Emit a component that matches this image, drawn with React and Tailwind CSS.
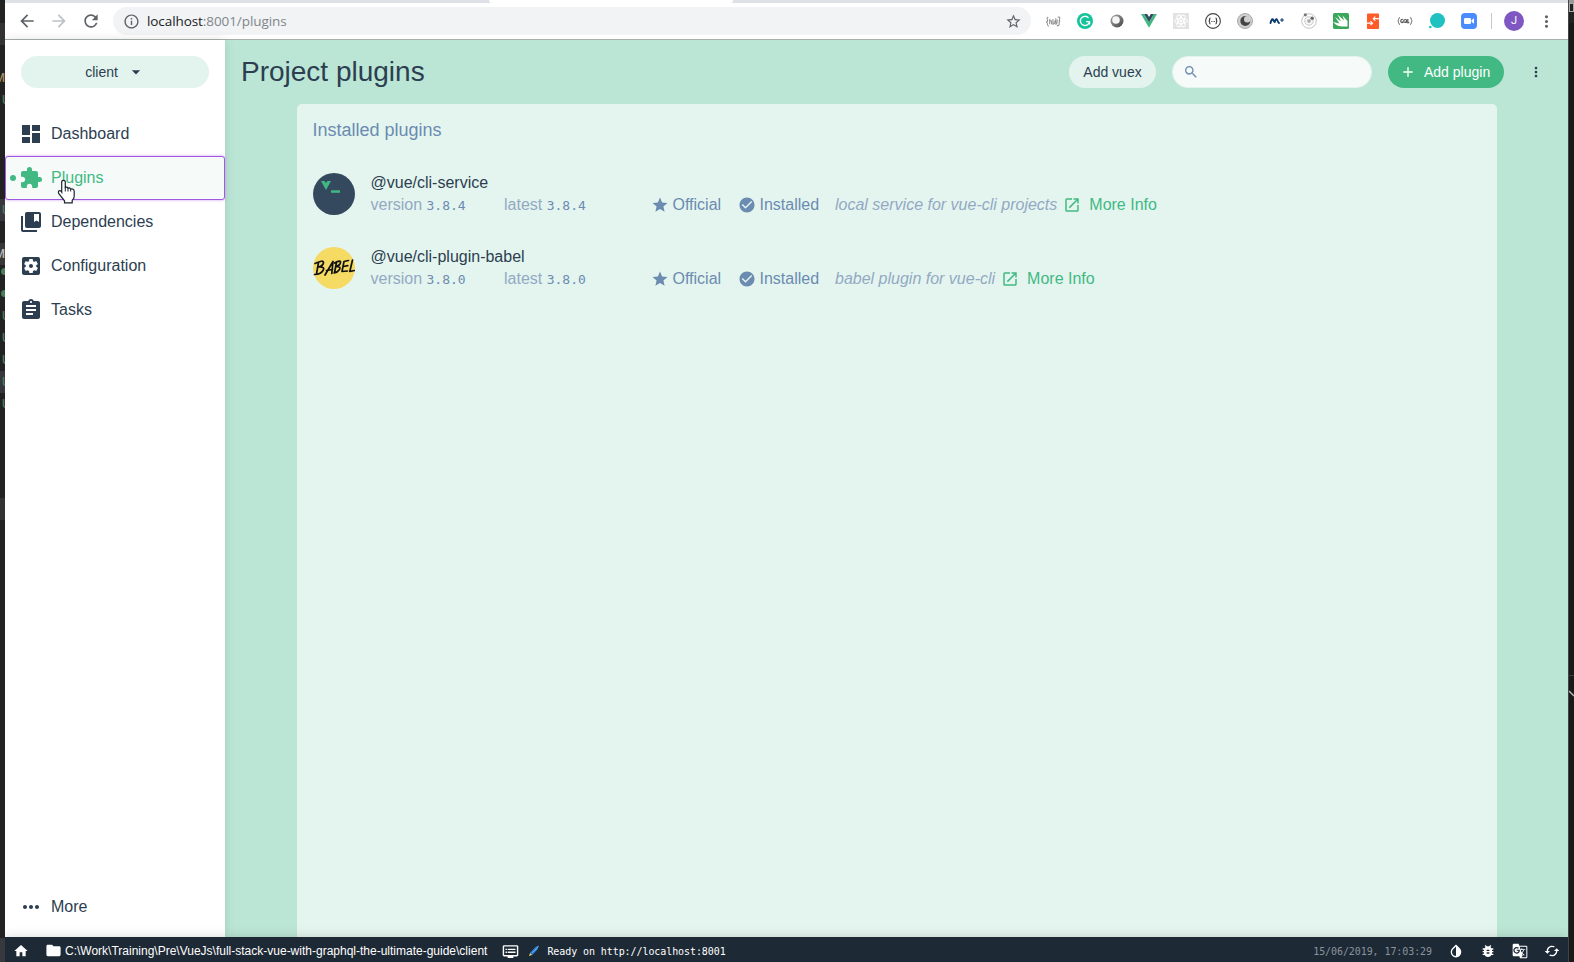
import React from "react";
import {
  MdDashboard, MdExtension, MdCollectionsBookmark, MdAssignment,
  MdMoreHoriz, MdMoreVert, MdSearch, MdAdd, MdArrowDropDown, MdStar, MdCheckCircle,
  MdOpenInNew, MdHome, MdFolder, MdDvr, MdBugReport, MdGTranslate, MdLoop,
  MdArrowBack, MdArrowForward, MdRefresh, MdInfoOutline, MdStarBorder, MdSettingsApplications,
} from "react-icons/md";

const MONO = "font-['DejaVu_Sans_Mono',monospace]";

function Ext({ children }) {
  return <div className="flex h-4 w-4 shrink-0 items-center justify-center">{children}</div>;
}

function Extensions() {
  return (
    <div className="flex gap-4">
      <Ext>
        <svg width="17" height="16" viewBox="0 0 17 16" fill="none" stroke="#8f8f8f" strokeWidth="1.100">
          <path d="M3.500 4Q1.500 4 2.500 6.500T1 9Q2.500 9 2.500 11T4 13.500M13.500 4Q16.500 3 15.500 6T16 8Q14.500 9 15 11T12.500 13M5 6v5.500M5 9q1.500-3 2 0v2.500M8.500 6v5.500q2 0 2-4M11.500 5v6.500q1.500 0 1.500-5" />
        </svg>
      </Ext>
      <Ext>
        <svg width="16" height="16" viewBox="0 0 16 16" className="shrink-0">
          <circle cx="8" cy="8" r="8" fill="#15c39a" />
          <path d="M11.500 5A4.600 4.600 0 1 0 12.500 8.600H9.200M12.500 8.600v3" fill="none" stroke="#fff" strokeWidth="1.400" />
        </svg>
      </Ext>
      <Ext>
        <svg width="16" height="16" viewBox="0 0 16 16">
          <defs><linearGradient id="ring" x1="0" y1="0" x2="1" y2="1"><stop stopColor="#aaa" /><stop offset="1" stopColor="#444" /></linearGradient></defs>
          <circle cx="8" cy="8" r="6.500" fill="url(#ring)" /><circle cx="7" cy="7" r="3.800" fill="#f5f5f5" />
        </svg>
      </Ext>
      <Ext>
        <svg width="16" height="16" viewBox="0 0 16 16">
          <path d="M0 1h3.200L8 9.300 12.800 1H16L8 14.800z" fill="#41b883" /><path d="M3.200 1h3L8 4l1.800-3h3L8 9.300z" fill="#35495e" />
        </svg>
      </Ext>
      <Ext>
        <svg width="16" height="16" viewBox="0 0 16 16">
          <path d="M0 0h16v16H0z" fill="#e2e2e2" />
          <g fill="none" stroke="#fff"><ellipse cx="8" cy="8" rx="6.500" ry="2.600" /><ellipse cx="8" cy="8" rx="6.500" ry="2.600" transform="rotate(60 8 8)" /><ellipse cx="8" cy="8" rx="6.500" ry="2.600" transform="rotate(120 8 8)" /></g>
          <circle cx="8" cy="8" r="1.300" fill="#fff" />
        </svg>
      </Ext>
      <Ext>
        <svg width="16" height="16" viewBox="0 0 16 16" fill="none" stroke="#444">
          <circle cx="8" cy="8" r="7.400" strokeWidth="1.100" />
          <path d="M5.500 5Q4.500 5 4.600 6.500T3.600 8Q4.600 8 4.600 9.500T5.500 11M10.500 5q1 0 .9 1.500t1 1.500q-1 0-1 1.500t-.9 1.500" strokeWidth="1.200" />
          <path d="M6.300 8.500h.8M7.700 8.500h.8M9.100 8.500h.8" />
        </svg>
      </Ext>
      <Ext>
        <svg width="16" height="16" viewBox="0 0 16 16">
          <circle cx="8" cy="8" r="7.500" fill="#cfcfcf" stroke="#aaa" /><circle cx="8.300" cy="8" r="5" fill="#444" /><circle cx="10.300" cy="6.300" r="3.300" fill="#cfcfcf" />
        </svg>
      </Ext>
      <Ext>
        <svg width="16" height="16" viewBox="0 0 16 16" fill="none" stroke="#0b3a6e" strokeLinecap="round" strokeLinejoin="round">
          <path d="M1.500 10Q3 4.500 4.300 7T5.700 9Q7.200 4.500 8.200 7T10 10" strokeWidth="1.900" /><path d="M11.500 7h3M13 5.500v3" strokeWidth="1.100" />
        </svg>
      </Ext>
      <Ext>
        <svg width="16" height="16" viewBox="0 0 16 16" fill="none" stroke="#c3c3c3">
          <circle cx="8" cy="8" r="7.300" /><circle cx="8" cy="8" r="4.200" /><circle cx="8" cy="8" r="1.800" fill="#aaa" /><circle cx="4.300" cy="1.800" r="1.600" fill="#777" stroke="none" /><circle cx="11.200" cy="5.200" r="1.700" fill="#666" stroke="none" />
        </svg>
      </Ext>
      <Ext>
        <svg width="16" height="16" viewBox="0 0 16 16">
          <rect width="16" height="16" rx="1.500" fill="#3aa85a" />
          <path d="M4.500 1.500L11 7.500 9.500 2.500 14.500 8v5.500H9.500Q4 13.500 0 9l6.500 1.500L2 4l6 4.500z" fill="#fff" />
        </svg>
      </Ext>
      <Ext>
        <svg width="16" height="16" viewBox="0 0 16 16">
          <rect x="2" y=".5" width="12" height="15.500" rx=".8" fill="#ff5b29" />
          <path d="M14 5.700H8.500M10.300 3.700L8.300 5.700l2 2M2 10.200h5.500M5.500 8.200l2 2-2 2" fill="none" stroke="#fff" strokeWidth="1.200" />
        </svg>
      </Ext>
      <Ext>
        <svg width="16" height="16" viewBox="0 0 16 16" fill="none" stroke="#555">
          <path d="M3 4.500q-1.300 0-1.300 1.700T.7 8q1 0 1 1.800T3 11.500M13 4.500q1.300 0 1.300 1.700t1 1.800q-1 0-1 1.800T13 11.500" strokeWidth=".8" />
          <path d="M5.800 6.500Q3.800 6 3.800 8t2 1.500V8.200M10.800 6v3.700h1.500" strokeWidth="1.200" /><circle cx="8.200" cy="8" r="1.500" strokeWidth="1.200" /><path d="M8.500 8.500l1.200 1.700" />
        </svg>
      </Ext>
      <Ext>
        <svg width="16" height="16" viewBox="0 0 16 16" fill="#20c1c1" className="shrink-0"><circle cx="8.500" cy="7.500" r="7.500" /><circle cx="1.300" cy="14" r="1.300" /></svg>
      </Ext>
      <Ext>
        <svg width="16" height="16" viewBox="0 0 16 16">
          <rect width="16" height="16" rx="4" fill="#4a8cff" /><rect x="3" y="5" width="7" height="6" rx="1.300" fill="#fff" /><path d="M10.500 7.200L13 5.300v5.400l-2.500-1.900z" fill="#fff" />
        </svg>
      </Ext>
    </div>
  );
}

function BrowserBar() {
  return (
    <div className="h-10 shrink-0 border-b border-[#a8b0ac] bg-white">
      <div className="h-[3px] bg-[#dee1e6]">
        <div className="flex h-full"><div className="ml-[484px] h-[3px] w-[244px] rounded-b-[3px] bg-white" /></div>
      </div>
      <div className="flex h-9 items-center">
        <div className="ml-[12px] flex w-[96px] shrink-0 gap-[12px] text-[#5f6368]">
          <MdArrowBack size={20} /><MdArrowForward size={20} className="text-[#bdc1c6]" /><MdRefresh size={20} />
        </div>
        <div className="flex h-7 w-[918px] shrink-0 items-center rounded-full bg-[#f1f3f4]">
          <MdInfoOutline size={17} className="ml-[10px] text-[#5f6368]" />
          <span className="ml-[7px] flex-1 font-['Open_Sans',sans-serif] text-[13.500px] tracking-[-0.080px] text-[#80868b]"><span className="text-[#202124]">localhost</span>:8001/plugins</span>
          <MdStarBorder size={17} className="mr-[9px] text-[#5f6368]" />
        </div>
        <div className="ml-[14px] flex items-center">
          <Extensions />
          <div className="ml-[14px] h-4 w-px bg-[#c8c8c8]" />
          <div className="ml-[12px] flex h-5 w-5 items-center justify-center rounded-full bg-[#7e57c2] font-['Roboto',sans-serif] text-[11px] text-white">J</div>
          <MdMoreVert size={19} className="ml-[13px] text-[#5f6368]" />
        </div>
      </div>
    </div>
  );
}

function NavItem({ icon: Icon, label, active }) {
  return (
    <div className={active
      ? "relative z-10 flex h-11 items-center rounded-[3px] border border-[#9f58e0] bg-[#f6fbf9] pl-[13px] text-[#42b983] shadow-[0_0_3px_#c89cf0]"
      : "flex h-11 items-center pl-[14px] text-[#2c3e50]"}>
      {active && <span className="absolute left-[4px] top-[18px] h-1.5 w-1.5 rounded-full bg-[#42b983]" />}
      <Icon className="h-6 w-6" />
      <span className="ml-[8px] text-[16px]">{label}</span>
      {active && (
        <svg className="absolute left-[51px] top-[22px]" width="21" height="26" viewBox="0 0 21 26">
          <path d="M6.500 1.300q1.800 0 1.800 1.800v5.200q2-.7 2.600.8 2-.6 2.600.9 3.500-.8 3.700 2.300v5q0 3-2 4v2.500H7.500v-2L2 15q-1.500-2.700.6-3.300 1-.2 2.100 1.500V3.100q0-1.800 1.800-1.800z" fill="#fff" stroke="#1a2330" strokeWidth="1.200" />
          <path d="M8.300 8v4.500M11 9v3.500M13.700 10v2.500" stroke="#1a2330" fill="none" />
        </svg>
      )}
    </div>
  );
}

function Sidebar() {
  return (
    <div className="z-10 flex w-[220px] shrink-0 flex-col bg-white shadow-[0_0_10px_rgba(0,0,0,0.12)]">
      <div className="mx-4 mt-4 flex h-8 items-center justify-center rounded-full bg-[#e3f4ee] text-[14px] text-[#2c3e50]">
        <span className="ml-[1px]">client</span><MdArrowDropDown size={20} className="ml-[8px]" />
      </div>
      <div className="mt-6">
        <NavItem icon={MdDashboard} label="Dashboard" />
        <NavItem icon={MdExtension} label="Plugins" active />
        <NavItem icon={MdCollectionsBookmark} label="Dependencies" />
        <NavItem icon={MdSettingsApplications} label="Configuration" />
        <NavItem icon={MdAssignment} label="Tasks" />
      </div>
      <div className="mt-auto pb-[8px]"><NavItem icon={MdMoreHoriz} label="More" /></div>
    </div>
  );
}

function VueLogo() {
  return (
    <svg width="42" height="42" viewBox="0 0 42 42">
      <circle cx="21" cy="21" r="21" fill="#35495e" />
      <path d="M8 8h3.500l1.500 2 1.500-2H18l-5 9z" fill="#41b883" /><path d="M18 17.300h9v2.500h-9z" fill="#41b883" />
    </svg>
  );
}

function BabelLogo() {
  return (
    <svg width="42" height="42" viewBox="0 0 42 42">
      <circle cx="21" cy="21" r="21" fill="#f5da63" />
      <g fill="none" stroke="#111" strokeWidth="1.700" strokeLinecap="round" strokeLinejoin="round">
        <path d="M5.500 15.500L3.500 27M2 16.500Q10.500 12.500 10.500 15.500T5.500 20Q12.500 19.500 10 23.500T1.500 27.500" />
        <path d="M12 28L20 14.500 18.800 26.500M13.500 23.500l6-1" />
        <path d="M23.500 15.500L21.500 25.500M21.500 16Q28 12.500 27.500 15.500T23 19.500Q28.500 19.500 26.500 22.500T21 26" />
        <path d="M35.500 13.500L31 14.500 29 24.500 34.500 24M30.300 19.500l4.500-.8M39.500 13L36.800 24.500 41.300 23.500" />
      </g>
    </svg>
  );
}

function PluginRow({ logo, name, version, desc }) {
  return (
    <div className="flex h-[74px] items-center px-4">
      {logo}
      <div className="ml-[15.500px] text-[16px] leading-[22px]">
        <div className="text-[#2c3e50]">{name}</div>
        <div className="flex items-center whitespace-nowrap text-[#6b8bb1]">
          <div className="w-[133.500px]"><span className="text-[#93a9c3]">version</span> <span className={MONO + " text-[13px]"}>{version}</span></div>
          <div className="w-[146.500px]"><span className="text-[#93a9c3]">latest</span> <span className={MONO + " text-[13px]"}>{version}</span></div>
          <MdStar size={18} /><span className="ml-[4px] w-[65px]">Official</span>
          <MdCheckCircle size={18} /><span className="ml-[4px] w-[75.500px]">Installed</span>
          <span className="italic text-[#93a9c3]">{desc}</span>
          <MdOpenInNew size={18} className="ml-[6px] text-[#42b983]" /><span className="ml-[8px] text-[#42b983]">More Info</span>
        </div>
      </div>
    </div>
  );
}

function Main() {
  return (
    <div className="flex min-w-0 flex-1 flex-col bg-[#bbe6d6]">
      <div className="flex h-16 shrink-0 items-center gap-4 px-4 text-[14px] text-[#2c3e50]">
        <h1 className="flex-1 text-[28px]">Project plugins</h1>
        <div className="flex h-8 w-[87px] items-center justify-center rounded-full bg-[#e3f4ee]">Add vuex</div>
        <div className="flex h-8 w-[200px] items-center rounded-full border border-[#e3f4ee] bg-[#f6fbf9] pl-[10px]"><MdSearch size={16} className="text-[#6b8bb1]" /></div>
        <div className="flex h-8 w-[116px] items-center rounded-full bg-[#42b983] pl-[12px] text-white"><MdAdd size={16} /><span className="ml-2">Add plugin</span></div>
        <div className="flex h-8 w-8 items-center justify-center"><MdMoreVert size={16} /></div>
      </div>
      <div className="mx-[72px] mr-[71px] flex-1 rounded-t-[5px] bg-[#e4f5ef]">
        <div className="flex h-[53px] items-center px-[15.500px] text-[18px] text-[#6b8bb1]">Installed plugins</div>
        <PluginRow logo={<VueLogo />} name="@vue/cli-service" version="3.8.4" desc="local service for vue-cli projects" />
        <PluginRow logo={<BabelLogo />} name="@vue/cli-plugin-babel" version="3.8.0" desc="babel plugin for vue-cli" />
      </div>
    </div>
  );
}

function StatusBar() {
  return (
    <div className="z-20 flex h-[25px] shrink-0 items-center bg-[#1d2935] text-white shadow-[0_0_12px_rgba(0,0,0,0.16)]">
      <MdHome size={16} className="ml-[8px] mt-[2px]" />
      <MdFolder size={17} className="ml-[16px] mt-[2px]" />
      <span className="ml-[3px] mt-[2px] text-[12px]">C:\Work\Training\Pre\VueJs\full-stack-vue-with-graphql-the-ultimate-guide\client</span>
      <MdDvr size={17} className="ml-[15px] mt-[3px]" />
      <svg width="12" height="12" viewBox="0 0 12 12" className="ml-[9px] mt-[3px]">
        <path d="M11 .5L8 1.500 2.300 7.500v2.500h2L9.500 4.500z" fill="#2d7fd3" /><path d="M10.500 1.500L4.500 7.500" stroke="#7cc0f5" strokeWidth=".8" /><path d="M1 11l1-3 2 2z" fill="#e8d34a" />
      </svg>
      <span className={MONO + " ml-[7px] mt-[3px] text-[10px] tracking-[-0.080px]"}>Ready on http://localhost:8001</span>
      <span className={MONO + " ml-auto mt-[3px] text-[10px] tracking-[-0.080px] text-[#8a949c]"}>15/06/2019, 17:03:29</span>
      <div className="ml-[16px] mr-[8px] mt-[3px] flex gap-[16px]">
        <svg width="16" height="16" viewBox="0 0 24 24" fill="currentColor"><path d="M17.660 7.930L12 2.270 6.340 7.930c-3.120 3.120-3.120 8.190 0 11.310C7.900 20.800 9.950 21.580 12 21.580s4.100-.78 5.660-2.340c3.120-3.120 3.120-8.190 0-11.310zM12 19.590c-1.600 0-3.110-.62-4.240-1.760C6.620 16.690 6 15.190 6 13.590s.62-3.110 1.760-4.240L12 5.100z" /></svg>
        <MdBugReport size={16} /><MdGTranslate size={16} /><MdLoop size={16} className="rotate-90" />
      </div>
    </div>
  );
}

const U = () => <div className="flex h-[22px] items-center pl-[2px]">U</div>;

function LeftEdge() {
  return (
    <div className="flex w-[5px] shrink-0 flex-col overflow-hidden bg-[#222] font-['Roboto',sans-serif] text-[12px] font-medium text-[#477c5c]">
      <div className="mt-[23px] h-[22px] shrink-0 bg-[#333]" />
      <div className="mt-[22px] flex h-[22px] items-center justify-end text-[#a58b60]">M</div>
      <U />
      <div className="mt-[88px] bg-[#37373d]"><U /></div>
      <div className="mt-[22px] flex h-[22px] items-center justify-end bg-[#383838] text-[#bbb]">M</div>
      <div className="ml-[1px] mt-[3px] h-[7px] w-[7px] rounded-full bg-[#477c5c]" />
      <div className="ml-[1px] mt-[15px] h-[7px] w-[7px] rounded-full bg-[#477c5c]" />
      <div className="mt-[8px]"><U /><U /><U /></div>
      <div className="bg-[#37373d]"><U /></div>
      <U />
      <div className="mt-[83px] h-[22px] shrink-0 bg-[#333]" />
      <div className="mt-auto h-[24px] bg-[#38383f]" />
    </div>
  );
}

function RightEdge() {
  return (
    <div className="flex w-[6px] shrink-0 flex-col overflow-hidden border-l border-[#444] bg-[#191919]">
      <div className="h-[3px] bg-[#999]" />
      <div className="h-[9px] border border-[#aaa] bg-[#222]" />
      <div className="h-[11px] bg-[#222]" />
      <div className="mt-[652px] h-px bg-[#3c3c3c]" />
      <svg className="mt-[14px]" width="5" height="8" viewBox="0 0 5 8"><path d="M0 1l5 5" stroke="#bbb" strokeWidth="1.500" /></svg>
    </div>
  );
}

export default function App() {
  return (
    <div className="flex h-[962px] w-[1574px] overflow-hidden bg-[#191919] font-['Liberation_Sans',Arial,sans-serif]">
      <LeftEdge />
      <div className="flex min-w-0 flex-1 flex-col overflow-hidden">
        <BrowserBar />
        <div className="flex min-h-0 flex-1"><Sidebar /><Main /></div>
        <StatusBar />
      </div>
      <RightEdge />
    </div>
  );
}
